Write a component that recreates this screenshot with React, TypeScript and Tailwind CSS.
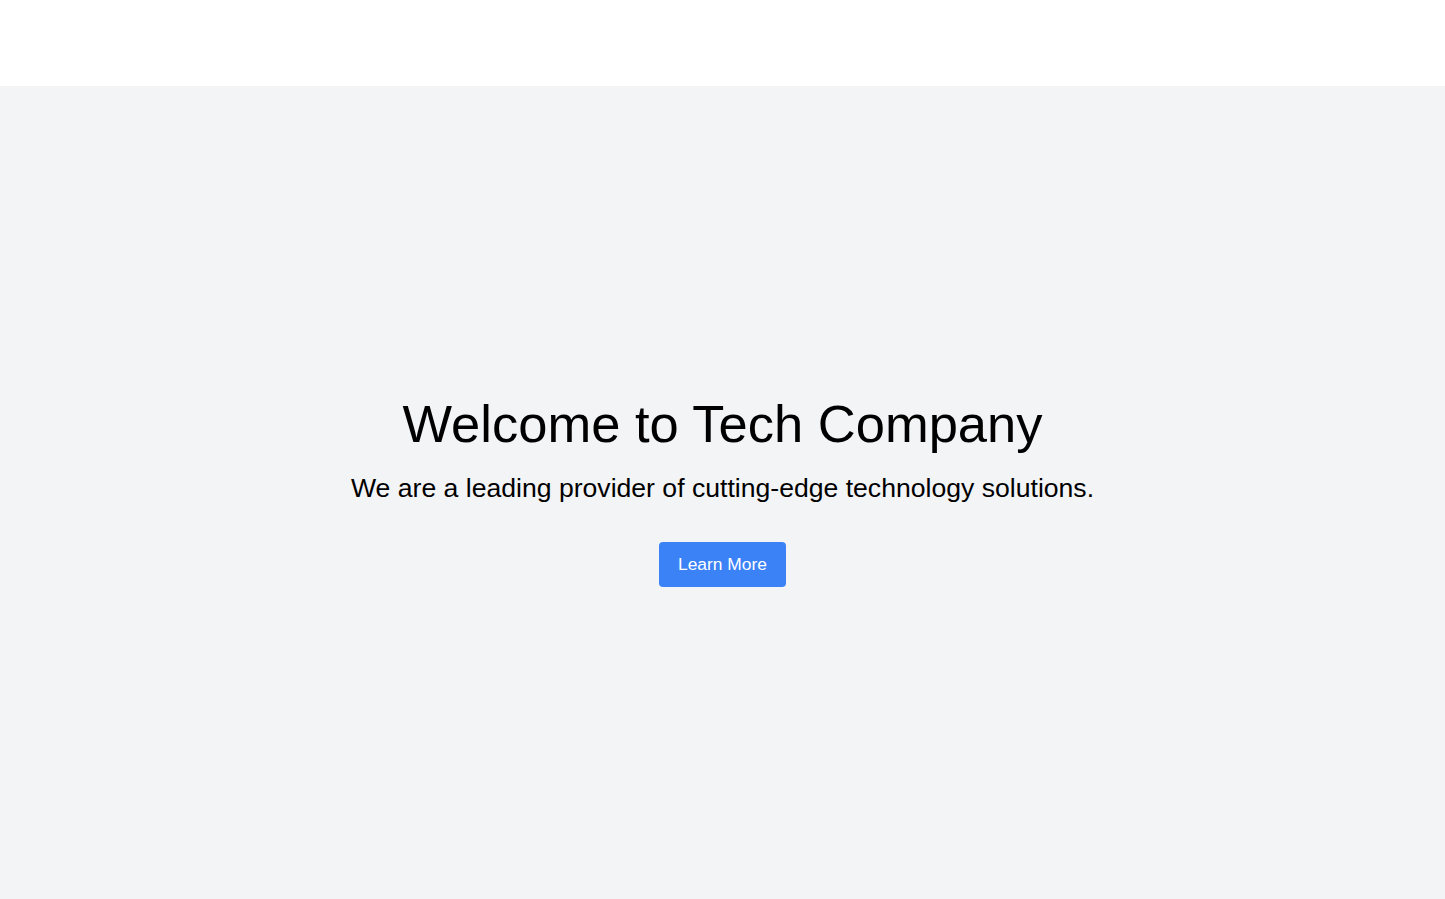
export default function App() {
  return (
    <div className="flex h-screen flex-col font-['Liberation_Sans',Arial,sans-serif]">
      <header className="h-[86px] bg-white"></header>
      <main className="flex flex-1 flex-col items-center justify-center bg-[#f3f4f6] pb-1 text-center text-black">
        <h1 className="text-[52.5px] leading-[60px]">Welcome to Tech Company</h1>
        <p className="mt-[18px] text-[26.6px] leading-[32px]">
          We are a leading provider of cutting-edge technology solutions.
        </p>
        <button className="mt-[38px] h-[45px] rounded bg-[#3b82f6] px-[19px] text-[17.4px] text-white">
          Learn More
        </button>
      </main>
    </div>
  );
}
